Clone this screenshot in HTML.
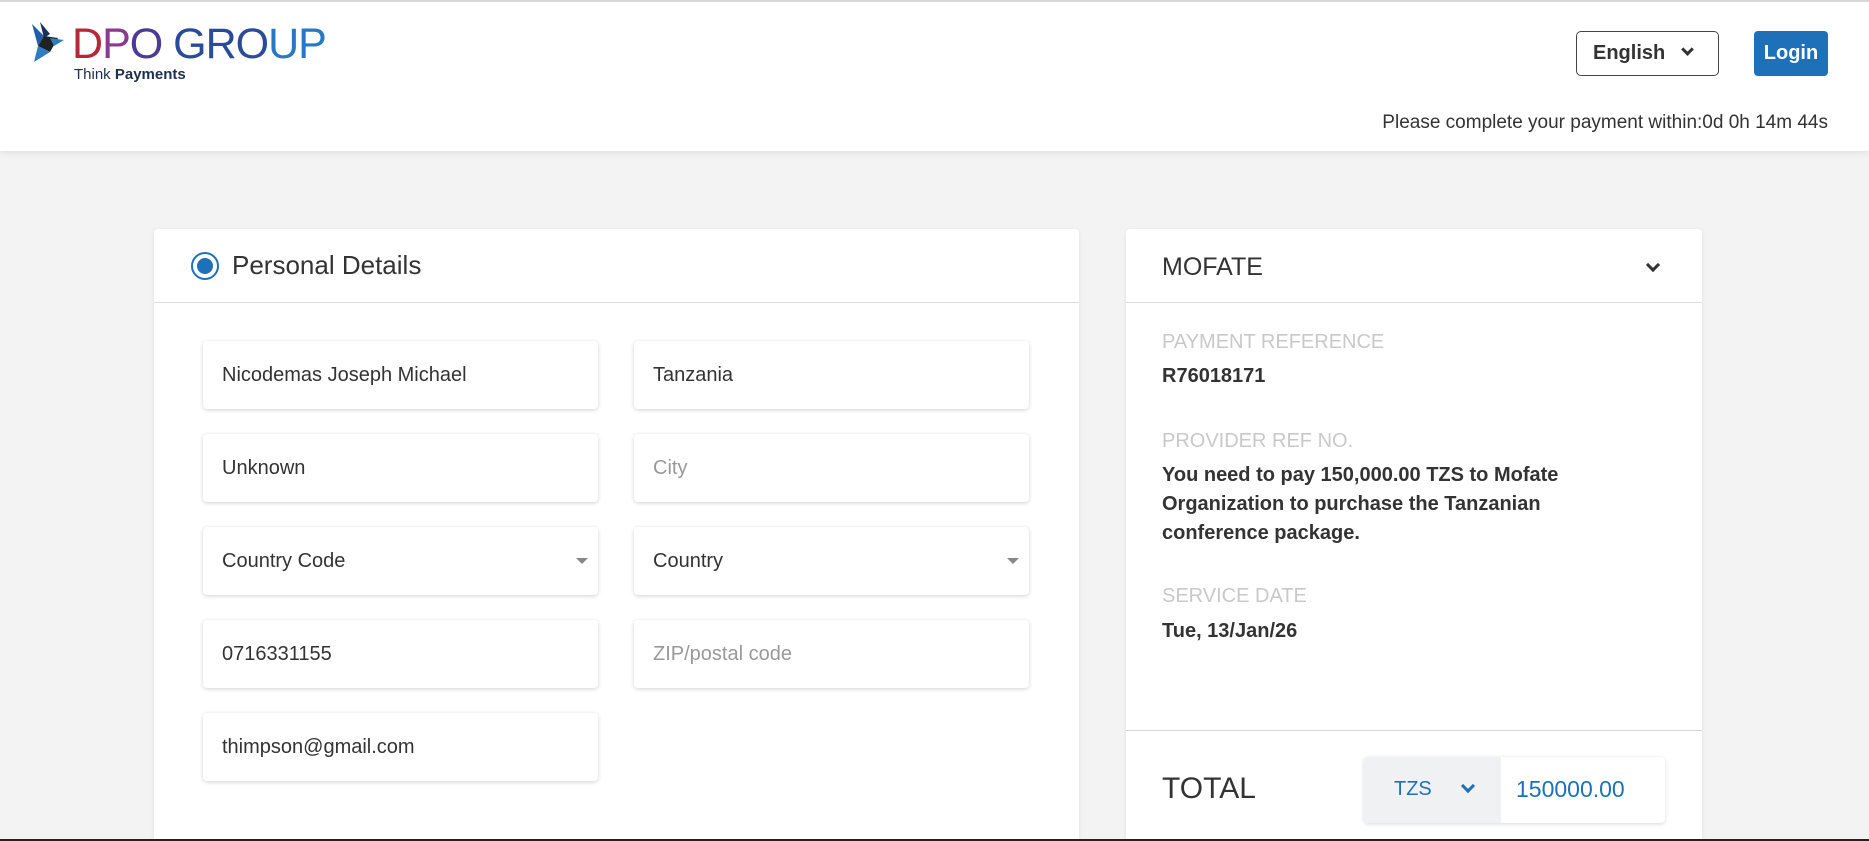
<!DOCTYPE html>
<html><head><meta charset="utf-8"><style>
*{box-sizing:border-box;margin:0;padding:0}
html{width:1869px;height:841px;overflow:hidden}
body{width:1869px;height:841px;overflow:hidden;background:#f3f3f3;font-family:"Liberation Sans",sans-serif;color:#333;position:relative}
.hdr{position:absolute;left:0;top:0;width:1869px;height:151px;background:#fff;border-top:2px solid #d8d8d8;box-shadow:0 2px 6px rgba(0,0,0,.08)}
.abs{position:absolute}
.card{position:absolute;background:#fff;border-radius:4px 4px 0 0;box-shadow:0 1px 4px rgba(0,0,0,.08)}
.inp{position:absolute;width:395px;height:68px;background:#fff;border-radius:4px;box-shadow:0 1px 4px rgba(0,0,0,.18);font-size:20px;line-height:68px;padding-left:19px;color:#333}
.ph{color:#999}
.car{position:absolute;right:10px;top:31px;border-left:6px solid transparent;border-right:6px solid transparent;border-top:6px solid #888}
.lbl{position:absolute;left:36px;font-size:20px;color:#c9c9c9}
.val{position:absolute;left:36px;font-size:20px;font-weight:bold;color:#333;line-height:29px}
.chev{display:inline-block;width:10px;height:10px;border-right:3px solid currentColor;border-bottom:3px solid currentColor;transform:rotate(45deg)}
</style></head><body>
<div class="hdr">
<svg class="abs" style="left:28px;top:20px" width="36" height="42" viewBox="0 0 36 42"><polygon points="4,2 16,14 10,24" fill="#1e5fa8"/><polygon points="12,0 22,12 16,16" fill="#16325c"/><polygon points="10,24 16,14 30,16 22,30" fill="#222"/><polygon points="22,16 36,18 26,24" fill="#2f7bc4"/><polygon points="10,24 22,30 6,40" fill="#2f7bc4"/></svg>
<div class="abs" style="left:72px;top:18px;font-size:43px;letter-spacing:-1px;line-height:48px"><span style="color:#b5283a">D</span><span style="color:#8a3a8f">P</span><span style="color:#4c3a96">O</span> <span style="color:#2a4b9a">GRO</span><span style="color:#2579c6">UP</span></div>
<div class="abs" style="left:74px;top:64px;font-size:15px;color:#1f2e4d">Think <b>Payments</b></div>
<div class="abs" style="left:1576px;top:29px;width:143px;height:45px;border:1px solid #444;border-radius:5px;font-size:20px;font-weight:bold;line-height:43px;padding-left:16px;color:#333">English <span class="chev" style="margin-left:12px;position:relative;top:-5px;width:9px;height:9px"></span></div>
<div class="abs" style="left:1754px;top:29px;width:74px;height:45px;background:#1e70b9;border-radius:4px;color:#fff;font-size:20px;font-weight:bold;line-height:45px;text-align:center">Login</div>
<div class="abs" style="right:41px;top:110px;font-size:19px;color:#333">Please complete your payment within:0d 0h 14m 44s</div>
</div>
<div class="card" style="left:154px;top:229px;width:925px;height:610px">
<div class="abs" style="left:37px;top:23px;width:28px;height:28px;border:2px solid #1e70b9;border-radius:50%"><div style="margin:4px;width:16px;height:16px;border-radius:50%;background:#1e70b9"></div></div>
<div class="abs" style="left:78px;top:21px;font-size:26px;color:#333">Personal Details</div>
<div class="abs" style="left:0;top:73px;width:925px;height:1px;background:#ddd"></div>
</div>
<div class="inp" style="left:203px;top:341px">Nicodemas Joseph Michael</div>
<div class="inp" style="left:634px;top:341px">Tanzania</div>
<div class="inp" style="left:203px;top:434px">Unknown</div>
<div class="inp ph" style="left:634px;top:434px">City</div>
<div class="inp" style="left:203px;top:527px">Country Code<div class="car"></div></div>
<div class="inp" style="left:634px;top:527px">Country<div class="car"></div></div>
<div class="inp" style="left:203px;top:620px">0716331155</div>
<div class="inp ph" style="left:634px;top:620px">ZIP/postal code</div>
<div class="inp" style="left:203px;top:713px">thimpson@gmail.com</div>
<div class="card" style="left:1126px;top:229px;width:576px;height:610px">
<div class="abs" style="left:36px;top:24px;font-size:25px;color:#333">MOFATE</div>
<div class="abs chev" style="left:522px;top:31px;color:#333"></div>
<div class="abs" style="left:0;top:73px;width:576px;height:1px;background:#ddd"></div>
<div class="lbl" style="top:102px">PAYMENT REFERENCE</div>
<div class="val" style="top:133px">R76018171</div>
<div class="lbl" style="top:201px">PROVIDER REF NO.</div>
<div class="val" style="top:232px;width:480px">You need to pay 150,000.00 TZS to Mofate Organization to purchase the Tanzanian conference package.</div>
<div class="lbl" style="top:356px">SERVICE DATE</div>
<div class="val" style="top:388px">Tue, 13/Jan/26</div>
<div class="abs" style="left:0;top:501px;width:576px;height:1px;background:#d5d5d5"></div>
<div class="abs" style="left:36px;top:543px;font-size:30px;color:#333">TOTAL</div>
<div class="abs" style="left:238px;top:528px;width:301px;height:66px;border-radius:4px;box-shadow:0 1px 4px rgba(0,0,0,.15);background:#fff;overflow:hidden">
<div class="abs" style="left:0;top:0;width:137px;height:66px;background:#f0f1f3"></div>
<div class="abs" style="left:30px;top:21px;font-size:20px;color:#1e70b9">TZS</div>
<div class="abs chev" style="left:99px;top:24px;color:#1e70b9"></div>
<div class="abs" style="left:152px;top:19px;font-size:23px;color:#1e70b9">150000.00</div>
</div>
</div>
<div class="abs" style="left:0;top:839px;width:1869px;height:2px;background:#222"></div>
</body></html>
